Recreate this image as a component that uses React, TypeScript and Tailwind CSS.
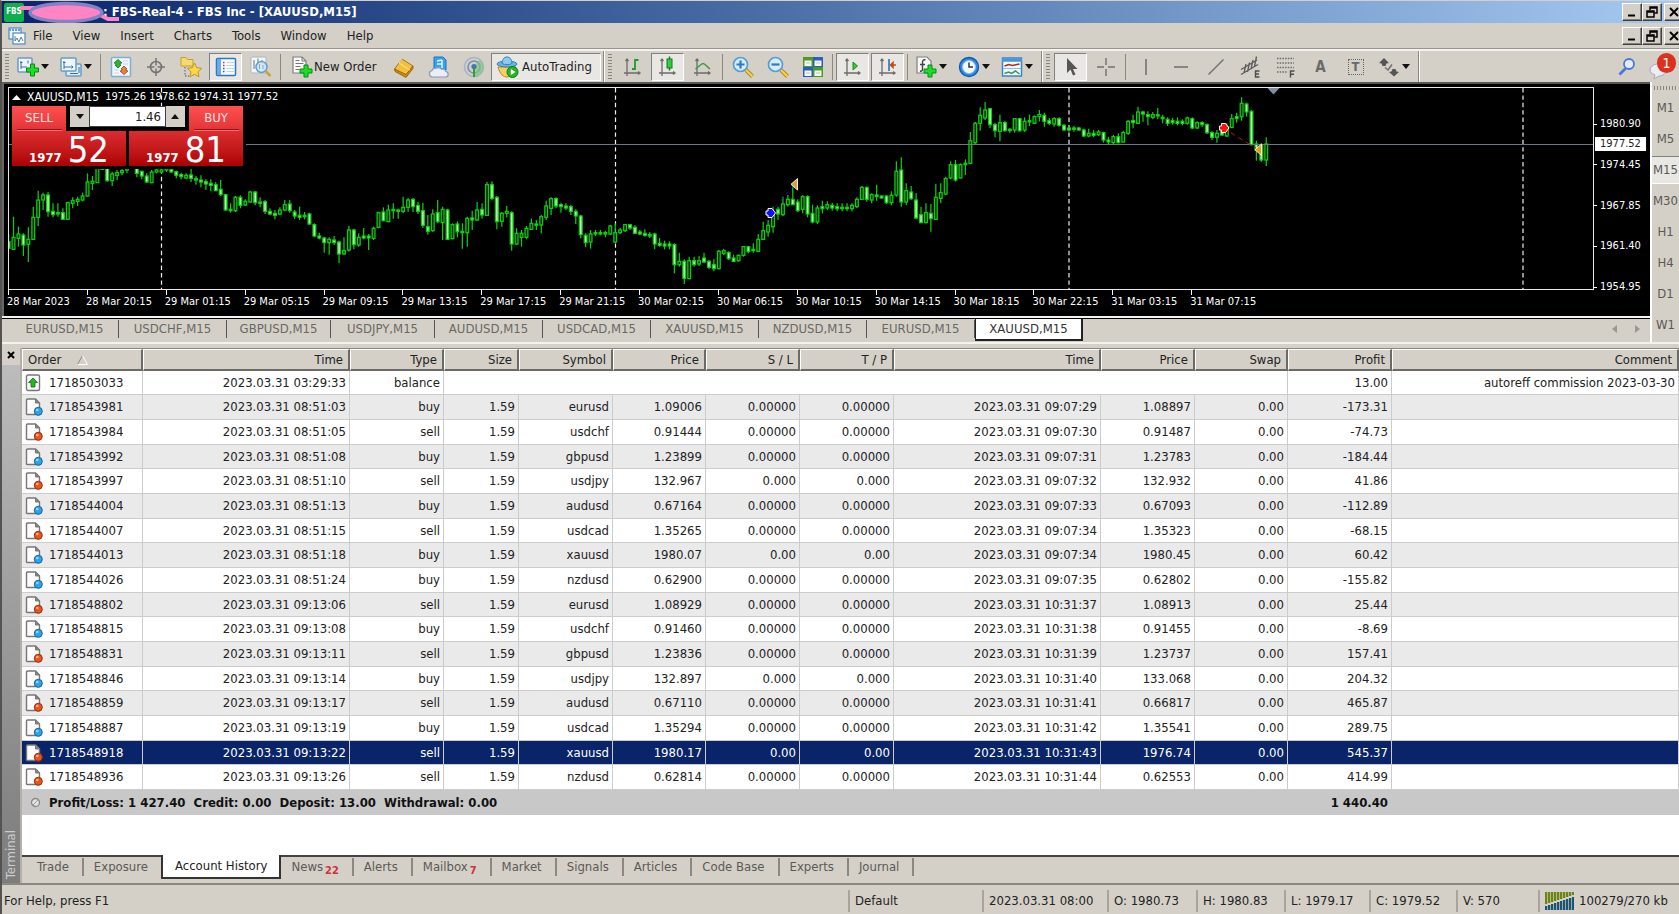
import React from "react";

type Trade = {
  id: string;
  open: string;
  side: "buy" | "sell";
  symbol: string;
  price: string;
  stop: string;
  close: string;
  exit: string;
  profit: string;
  selected?: boolean;
};

const t = (
  id: string,
  open: string,
  side: "buy" | "sell",
  symbol: string,
  price: string,
  stop: string,
  close: string,
  exit: string,
  profit: string,
  selected = false
): Trade => ({ id, open, side, symbol, price, stop, close, exit, profit, selected });

const TRADES: Trade[] = [
  t("1718543981", "08:51:03", "buy", "eurusd", "1.09006", "0.00000", "09:07:29", "1.08897", "-173.31"),
  t("1718543984", "08:51:05", "sell", "usdchf", "0.91444", "0.00000", "09:07:30", "0.91487", "-74.73"),
  t("1718543992", "08:51:08", "buy", "gbpusd", "1.23899", "0.00000", "09:07:31", "1.23783", "-184.44"),
  t("1718543997", "08:51:10", "sell", "usdjpy", "132.967", "0.000", "09:07:32", "132.932", "41.86"),
  t("1718544004", "08:51:13", "buy", "audusd", "0.67164", "0.00000", "09:07:33", "0.67093", "-112.89"),
  t("1718544007", "08:51:15", "sell", "usdcad", "1.35265", "0.00000", "09:07:34", "1.35323", "-68.15"),
  t("1718544013", "08:51:18", "buy", "xauusd", "1980.07", "0.00", "09:07:34", "1980.45", "60.42"),
  t("1718544026", "08:51:24", "buy", "nzdusd", "0.62900", "0.00000", "09:07:35", "0.62802", "-155.82"),
  t("1718548802", "09:13:06", "sell", "eurusd", "1.08929", "0.00000", "10:31:37", "1.08913", "25.44"),
  t("1718548815", "09:13:08", "buy", "usdchf", "0.91460", "0.00000", "10:31:38", "0.91455", "-8.69"),
  t("1718548831", "09:13:11", "sell", "gbpusd", "1.23836", "0.00000", "10:31:39", "1.23737", "157.41"),
  t("1718548846", "09:13:14", "buy", "usdjpy", "132.897", "0.000", "10:31:40", "133.068", "204.32"),
  t("1718548859", "09:13:17", "sell", "audusd", "0.67110", "0.00000", "10:31:41", "0.66817", "465.87"),
  t("1718548887", "09:13:19", "buy", "usdcad", "1.35294", "0.00000", "10:31:42", "1.35541", "289.75"),
  t("1718548918", "09:13:22", "sell", "xauusd", "1980.17", "0.00", "10:31:43", "1976.74", "545.37", true),
  t("1718548936", "09:13:26", "sell", "nzdusd", "0.62814", "0.00000", "10:31:44", "0.62553", "414.99"),
];

/* Each candle: wick top, body top, body bottom, wick bottom (thirds of a pixel), u = hollow, d = filled. */
const EARLY = `252 275 295 298 d,200 262 298 298 u,230 252 265 290 u,250 255 285 318 d,232 268 283 336 u,170 202 268 268 u,122 150 202 228 u,128 135 150 180 u,126 135 185 200 d,160 184 194 202 d,160 188 192 200 d,175 188 208 210 d,155 158 208 208 u,142 152 160 175 u,140 148 154 168 u,128 138 150 154 u,70 96 138 140 u,78 94 100 120 u,55 55 98 98 u,40 45 58 58 u,40 50 92 95 d,65 72 92 108 u,60 68 76 90 u,50 62 68 76 u,45 55 60 70 u,40 44 50 55 u,50 52 70 82 d,62 64 78 88 d,70 78 96 98 d,60 66 98 100 u,52 60 66 70 u,50 60 66 70 u,48 55 60 66 u,55 58 66 68 d,62 65 76 85 d,68 74 80 88 d,70 76 84 88 u,56 75 85 96 d,78 86 90 104 d,76 90 96 112 d,88 95 102 120 d,88 100 106 124 d,96 104 122 124 d,90 118 134 138 d,132 134 180 182 d,160 178 182 188 d,138 142 182 186 u,136 142 166 175 d,148 154 165 168 u,122 126 156 158 u,124 126 158 166 d,142 156 160 172 d,150 155 184 192 d,175 184 192 196 d,180 190 196 208 d,172 180 192 196 u,150 164 180 184 u,150 162 182 188 d,180 186 198 206 d,170 196 202 210 d,186 196 200 208 d,188 192 222 225 d,220 224 258 262 d,248 258 264 268 d,260 264 278 308 d,262 268 278 314 u,258 270 278 284 d,272 276 312 340 d,262 302 312 314 u,228 240 300 305 u,236 240 284 298 d,250 262 285 290 u,234 258 264 268 d,252 258 264 300 d,230 235 265 270 u,185 188 232 235 u,172 186 212 214 d,164 180 215 216 u,160 178 182 206 d,176 180 184 206 d,140 172 184 190 u,144 150 172 185 u,144 148 170 186 d,155 166 184 192 d,158 182 226 234 d,195 230 244 254 d,178 192 242 245 u,150 188 215 220 d,170 178 218 270 u,176 180 268 270 d,220 224 266 268 u,214 222 245 262 d,220 244 248 296 d,200 205 248 290 u,182 204 210 240 d,156 180 210 212 u,160 178 195 206 d,96 104 196 196 u,94 104 145 150 d,138 142 215 238 d,186 190 214 230 u,168 184 190 202 u,184 188 282 302 d,235 250 282 285 u,240 250 262 290 u,228 235 262 268 u,206 220 238 240 u,210 222 226 240 d`;
const LATE = `405 410 435 460 u,362 378 412 420 u,352 356 385 405 u,352 356 378 385 d,368 374 380 398 d,370 378 384 390 d,374 380 394 405 d,388 394 408 432 d,404 408 464 475 d,460 466 488 502 d,450 462 486 506 u,450 458 462 468 d,450 458 462 466 d,452 458 462 472 d,435 438 462 465 u,430 458 486 490 u,444 450 458 462 u,432 434 452 456 u,432 434 444 450 d,436 442 460 462 d,450 456 462 466 d,448 460 466 470 d,456 464 468 474 d,458 462 492 508 d,474 490 496 500 d,482 492 498 508 d,484 492 498 508 d,490 494 554 580 d,518 544 554 560 u,538 544 595 612 d,530 542 596 598 u,530 542 554 560 d,528 542 552 558 u,518 534 546 550 d,540 544 562 568 d,538 554 566 574 d,510 514 566 568 u,506 512 520 526 u,514 518 536 540 d,524 534 544 546 d,524 526 542 545 u,498 500 526 530 u,498 500 515 520 d,490 508 512 518 d,462 478 514 516 u,425 452 478 480 u,420 436 456 470 u,380 402 440 458 u,380 388 402 420 d,350 372 404 408 u,345 358 374 380 u,318 358 374 374 d,358 366 392 396 d,346 350 388 400 u,346 350 402 412 d,374 400 426 430 d,376 384 426 432 u,362 380 386 400 d,364 374 384 390 u,368 376 384 392 d,370 380 386 394 d,370 382 386 394 d,370 382 386 394 d,370 376 386 394 u,352 358 380 385 u,318 322 358 360 u,320 322 358 365 d,340 344 360 370 u,314 345 350 362 d,346 348 354 356 d,346 348 368 372 d,334 346 368 376 u,244 274 345 350 u,232 270 366 380 d,310 332 366 375 u,318 336 356 360 d,340 360 414 418 d,380 404 428 430 d,370 398 428 430 u,372 400 416 455 d,312 352 418 420 u,310 338 355 370 u,290 296 342 345 u,244 254 294 298 u,240 254 300 305 d,250 254 294 295 u,238 250 254 285 d,156 182 250 252 u,126 130 188 192 u,82 106 130 152 u,66 90 114 120 u,84 86 134 145 d,128 134 152 172 d,104 128 154 184 u,122 128 152 155 d,144 148 152 158 d,114 116 150 158 u,114 116 152 155 d,112 124 150 156 u,104 122 126 138 d,106 110 130 132 u,90 104 110 124 u,98 106 124 140 d,114 122 130 136 d,112 116 132 140 u,112 116 136 140 d,132 136 150 152 d,136 144 150 155 d,138 144 148 155 d,140 144 150 152 d,146 150 168 170 d,146 160 168 172 u,150 160 166 172 d,150 156 164 168 u,155 158 180 188 d,170 180 186 192 d,165 170 188 192 u,160 170 188 190 d,152 158 186 188 u,120 124 160 165 u,105 122 128 145 d,80 96 130 132 u,92 96 102 125 d,94 104 110 136 d,96 104 112 118 u,84 104 108 118 d,104 112 116 130 d,112 118 130 138 d,114 122 128 134 d,112 124 130 136 d,118 124 130 136 d,110 114 130 134 u,112 116 144 148 d,124 128 144 146 u,124 128 134 142 d,130 134 158 162 d,154 158 172 180 d,150 160 172 188 u,138 150 165 168 d,130 140 168 170 u,102 116 142 145 u,98 110 116 128 d,52 70 110 122 u,68 72 96 110 d,90 94 194 196 d,182 192 210 242 d,190 196 240 246 d,172 192 240 258 u`;

const parse = (text: string, base: number) =>
  text.split(",").map((row) => {
    const [hi, top, bottom, lo, kind] = row.split(" ");
    const y = (v: string) => base + Number(v) / 3;
    return { hi: y(hi), top: y(top), bottom: y(bottom), lo: y(lo), hollow: kind === "u" };
  });

const CANDLES = [...parse(EARLY, 150), ...parse(LATE, 80)];

function Candles() {
  return (
    <g stroke="#10cc10" strokeWidth="1.25">
      {CANDLES.map((c, i) => {
        const x = 8.6 + i * 4.932;
        return (
          <g key={i}>
            <line x1={x} x2={x} y1={c.hi} y2={c.lo} />
            <rect
              x={x - 1.4}
              y={c.top}
              width="2.8"
              height={Math.max(c.bottom - c.top, 1)}
              fill={c.hollow ? "#002a00" : "#b4f0b4"}
            />
          </g>
        );
      })}
    </g>
  );
}

function Plot() {
  return (
    <svg className="block h-[201px] w-full" aria-label="XAUUSD M15 chart">
      <g transform="translate(-9 -88)">
        <g stroke="#f0f0f0" strokeWidth="1.2" strokeDasharray="4.4 3">
          <line x1="161.5" x2="161.5" y1="88" y2="290" />
          <line x1="615.5" x2="615.5" y1="88" y2="290" />
          <line x1="1069" x2="1069" y1="88" y2="290" />
          <line x1="1523" x2="1523" y1="88" y2="290" />
        </g>
        <Candles />
        <line x1="9" x2="4000" y1="144.5" y2="144.5" stroke="#6b7a88" />
        <path d="M770 213 L795 184" stroke="#1414b4" strokeDasharray="4 4" />
        <path d="M1223 128 L1259 150" stroke="#c01414" strokeDasharray="5 4" />
        <path d="M766 211h2v-2.500h4l3.500 4.500-3.500 4.500h-4V215h-2z" fill="#1010ff" stroke="#fff" />
        <path d="M1219.500 126h2v-2.500h4l3.500 4.500-3.500 4.500h-4V130h-2z" fill="#ff1010" stroke="#fff" />
        <path d="M797.500 178.500v11.500l-6.500-5.700z" fill="#d8a23c" stroke="#f5ecd0" />
        <path d="M1261.500 144v11.500l-6.500-5.700z" fill="#e0a020" stroke="#f5ecd0" />
        <path d="M1267.500 88h12l-6 6.500z" fill="#8090a4" />
      </g>
    </svg>
  );
}

/* ---------- toolbar glyphs ---------- */

const Svg = ({ children }: { children: React.ReactNode }) => (
  <svg width="24" height="24" viewBox="0 0 24 24" fill="none" className="shrink-0" aria-hidden="true">
    {children}
  </svg>
);

const plus = (x: number, y: number) => (
  <path
    d={`M${x + 4} ${y}h4v4h4v4h-4v4h-4v-4h-4v-4h4z`}
    fill="#1fdc2c"
    stroke="#078a12"
    strokeWidth="1"
    strokeLinejoin="round"
  />
);

const axes = (
  <path
    d="M6 4v17M3 18h16M4.500 6L6 4l1.500 2M17 16.500l2 1.500-2 1.500"
    stroke="#6c6c6c"
    strokeWidth="1.300"
  />
);

const I = {
  newChart: (
    <Svg>
      <rect x="2" y="3" width="14" height="14" rx="1" fill="#eef6fc" stroke="#6a9cc8" strokeWidth="1.500" />
      <path d="M5 6v8M4 7.500h2.500M5 12h6M12 5.500v3" stroke="#3d6f9d" />
      {plus(10.5, 9)}
    </Svg>
  ),
  profiles: (
    <Svg>
      <rect x="7" y="9" width="15" height="12" rx="1" fill="#dcecf8" stroke="#6a9cc8" strokeWidth="1.500" />
      <rect x="2" y="3" width="15" height="13" rx="1" fill="#eef6fc" stroke="#6a9cc8" strokeWidth="1.500" />
      <path d="M5 6v8M4 7.500h2.500M5 12h9M12.500 10.500L14 12l-1.500 1.500M20 12v6M11 18.500h8" stroke="#3d6f9d" />
    </Svg>
  ),
  marketWatch: (
    <Svg>
      <rect x="2.500" y="2.500" width="19" height="19" rx="1" fill="#f2f9ff" stroke="#7ab0da" strokeWidth="1.500" />
      <path d="M14 6h5M14 9h5M5 15h5M5 18h5" stroke="#c4d8e8" />
      <path d="M9 4.500l4 3.500-2 .3v1.500l1 .2L9 13l-3-3 1-.2V8.300L5 8z" fill="#2fb52f" stroke="#157515" strokeWidth=".8" />
      <path d="M15 19.500l4-3.500-2-.3v-1.500l1-.2L15 11l-3 3 1 .2v1.500l-2 .3z" fill="#f0803c" stroke="#a83c10" strokeWidth=".8" />
    </Svg>
  ),
  cross: (
    <Svg>
      <circle cx="12" cy="12" r="5.500" stroke="#747474" strokeWidth="1.700" />
      <path d="M12 3v7.500M12 13.500V21M3 12h7.500M13.500 12H21" stroke="#747474" strokeWidth="1.500" />
    </Svg>
  ),
  navigator: (
    <Svg>
      <path d="M2 2.500h5l1.500 2H14v6.500H2z" fill="#f4da70" stroke="#c8a028" />
      <path d="M6 12v9h4" stroke="#777" strokeWidth="1.300" strokeDasharray="1.500 1.500" />
      <path
        d="M15.500 8l2.200 4.700 5 .6-3.700 3.500 1 5-4.500-2.500-4.500 2.500 1-5-3.700-3.500 5-.6z"
        fill="#fbd84a"
        stroke="#c49420"
      />
    </Svg>
  ),
  terminal: (
    <Svg>
      <rect x="2.500" y="3.500" width="19" height="17" rx="1" fill="#f7fbff" stroke="#2f78c0" strokeWidth="1.500" />
      <path d="M3 4h4v16H3z" fill="#6aace8" />
      <path d="M9 7.500h1.500M9 10.500h1.500" stroke="#d03030" strokeWidth="1.500" />
      <path d="M9 13.500h1.500M9 16.500h1.500" stroke="#3060a0" strokeWidth="1.500" />
      <path d="M12.500 7.500H20M12.500 10.500H20M12.500 13.500H20M12.500 16.500H20" stroke="#c4d4e4" />
    </Svg>
  ),
  tester: (
    <Svg>
      <rect x="2" y="2" width="15" height="16" rx="1" fill="#f4f6f8" stroke="#a8b8c4" />
      <path d="M5 5v9M9 3.500v7M13 5v5" stroke="#5c7890" />
      <circle cx="12.500" cy="12" r="5.500" fill="#cfe6f8" fillOpacity=".9" stroke="#6a9cc8" strokeWidth="1.500" />
      <path d="M10.500 9v5M14 10v4" stroke="#7fa8c8" />
      <path d="M17 16.500l4.500 4.500" stroke="#d0a030" strokeWidth="2.500" />
    </Svg>
  ),
  order: (
    <Svg>
      <path d="M3 2h9l4 4v12H3z" fill="#fbfbfb" stroke="#808080" strokeWidth="1.200" />
      <path d="M12 2v4h4M5.500 5.500h4M5.500 8.500h8M5.500 11.500h5M5.500 14.500h4" stroke="#777" />
      {plus(10, 10)}
    </Svg>
  ),
  book: (
    <Svg>
      <path d="M2.500 14L10 4l11 7-7 9.500z" fill="#f2c13c" stroke="#a87410" strokeLinejoin="round" />
      <path d="M2.500 14l.5 2.500 11 6 7-9V11l-7 8.500z" fill="#c88a18" stroke="#8c5c0c" strokeWidth=".8" />
      <path d="M10 4l-3 4 11 7" stroke="#fae08c" />
    </Svg>
  ),
  cloud: (
    <Svg>
      <path d="M7 2h9l3 3v10H7z" fill="#36a4f0" stroke="#1c74c0" />
      <path d="M10 6l5-1M10 9h5M15 5v8" stroke="#e4f4ff" strokeWidth="1.500" />
      <path
        d="M5.500 22a3.300 3.300 0 0 1-.5-6.500 3.500 3.500 0 0 1 4-2.300 4.500 4.500 0 0 1 5.500 1 3.500 3.500 0 0 1 4.300 2.300A2.800 2.800 0 0 1 19 22z"
        fill="#e9eff8"
        stroke="#8898b8"
        strokeWidth="1.200"
      />
    </Svg>
  ),
  signal: (
    <Svg>
      <circle cx="12" cy="12" r="9.500" stroke="#a4b4c8" strokeWidth="1.600" />
      <circle cx="12" cy="12" r="6" stroke="#7694b4" strokeWidth="1.700" />
      <path d="M12 12v10a10 10 0 0 0 9.500-9A8 8 0 0 0 17 5z" fill="#7cc47c" fillOpacity=".65" />
      <circle cx="12" cy="11.500" r="2.600" fill="#3e78b8" />
      <path d="M12 13v9" stroke="#3a9a3a" strokeWidth="2" />
    </Svg>
  ),
  expert: (
    <Svg>
      <path d="M3 12c2 8 6 10 9 10s7-3 9-10z" fill="#f5d060" stroke="#b88c20" />
      <ellipse cx="12" cy="9" rx="10" ry="3" fill="#6ab4e4" stroke="#3a80b4" />
      <path d="M7 8.500C7.500 4 9 2 12 2s4.500 2 5 6.500c-3 1.500-7 1.500-10 0z" fill="#8ccaf0" stroke="#3a80b4" />
      <circle cx="17.500" cy="17" r="5.500" fill="#28b428" stroke="#0f7c0f" />
      <path d="M15.800 14v6l4.700-3z" fill="#fff" />
    </Svg>
  ),
  bars: (
    <Svg>
      {axes}
      <path d="M14 4v11M14 5h3.500M11 14h3" stroke="#1f9c2c" strokeWidth="1.800" />
    </Svg>
  ),
  candles: (
    <Svg>
      {axes}
      <path d="M13.500 1.500v14" stroke="#0f7c1c" strokeWidth="1.500" />
      <rect x="11" y="4" width="5" height="9" fill="#2cd03c" stroke="#0f7c1c" />
    </Svg>
  ),
  line: (
    <Svg>
      {axes}
      <path d="M4.500 14C8 12 10 8.500 12 8.500s3.500 3 7 5.500" stroke="#3a9c44" strokeWidth="1.500" />
    </Svg>
  ),
  zoomIn: (
    <Svg>
      <path d="M15 15l6.500 6.500" stroke="#b88a18" strokeWidth="4" />
      <path d="M15 15l6.500 6.500" stroke="#f4d458" strokeWidth="2" />
      <circle cx="9.500" cy="9.500" r="7" fill="#d4ecfc" stroke="#5a9cd4" strokeWidth="1.700" />
      <path d="M9.500 5.500v8M5.500 9.500h8" stroke="#2f7cb8" strokeWidth="2.200" />
    </Svg>
  ),
  zoomOut: (
    <Svg>
      <path d="M15 15l6.500 6.500" stroke="#b88a18" strokeWidth="4" />
      <path d="M15 15l6.500 6.500" stroke="#f4d458" strokeWidth="2" />
      <circle cx="9.500" cy="9.500" r="7" fill="#d4ecfc" stroke="#5a9cd4" strokeWidth="1.700" />
      <path d="M5.500 9.500h8" stroke="#2f7cb8" strokeWidth="2.200" />
    </Svg>
  ),
  tiles: (
    <Svg>
      <rect x="2" y="2" width="10" height="10" fill="#4c9c24" />
      <rect x="12" y="2" width="10" height="10" fill="#2c5cc0" />
      <rect x="2" y="12" width="10" height="10" fill="#2c5cc0" />
      <rect x="12" y="12" width="10" height="10" fill="#4c9c24" />
      <path d="M3.500 5.500h7V11h-7zM13.500 5.500h7V11h-7zM3.500 15.500h7V21h-7zM13.500 15.500h7V21h-7z" fill="#f2f7f2" />
      <path d="M5 8h4M15 8h4M5 18h4M15 18h4" stroke="#b8ccb0" />
    </Svg>
  ),
  autoScroll: (
    <Svg>
      {axes}
      <path d="M12 7v8l4.500-4z" fill="#3cc83c" stroke="#148c1c" />
    </Svg>
  ),
  shift: (
    <Svg>
      {axes}
      <path d="M13 4v12" stroke="#3a78b4" strokeWidth="1.700" />
      <path d="M20 10h-6M17 7.500L14.500 10l2.500 2.500z" fill="#c84818" stroke="#c84818" strokeWidth="1.500" />
    </Svg>
  ),
  indicators: (
    <Svg>
      <path d="M3 2h10l4 4v12H3z" fill="#f7f7f7" stroke="#808080" strokeWidth="1.200" />
      <path d="M11.500 5C9 4 8.500 6 8.500 8v6c0 2-1 2.500-2.500 2M6 9.500h5" stroke="#444" strokeWidth="1.400" />
      {plus(10, 10)}
    </Svg>
  ),
  clock: (
    <Svg>
      <circle cx="12" cy="12" r="9.500" fill="#2c8ce8" stroke="#0e5cac" strokeWidth="1.400" />
      <circle cx="12" cy="12" r="6.500" fill="#f2f8ff" stroke="#8cc0f0" />
      <path d="M12 7.500V12h4" stroke="#333" strokeWidth="1.500" />
    </Svg>
  ),
  template: (
    <Svg>
      <rect x="2.500" y="3" width="19" height="18" fill="#f4faff" stroke="#3a84cc" strokeWidth="1.500" />
      <path d="M2 5h20" stroke="#4a94dc" strokeWidth="3.500" />
      <path d="M4.500 11l4-1.500 4 1 7-1.500" stroke="#a03020" strokeWidth="1.500" />
      <path d="M3 13.500h18" stroke="#90b8d8" />
      <path d="M4.500 18.500l4-1.500 3 1.500 4-2.500 4 3" stroke="#2f9c4c" strokeWidth="1.500" />
    </Svg>
  ),
  pointer: (
    <Svg>
      <path d="M8 3v15l3.500-3.500L14 20.500l2.500-1-2.500-5.500h4.500z" fill="#555" />
    </Svg>
  ),
  crossPlain: (
    <Svg>
      <path d="M12 3v7M12 14v7M3 12h7M14 12h7" stroke="#707070" strokeWidth="1.400" />
    </Svg>
  ),
  vline: (
    <Svg>
      <path d="M12 4v16" stroke="#666" strokeWidth="1.400" />
    </Svg>
  ),
  hline: (
    <Svg>
      <path d="M5 12h14" stroke="#666" strokeWidth="1.400" />
    </Svg>
  ),
  trend: (
    <Svg>
      <path d="M4.500 19.500l15-15" stroke="#707070" strokeWidth="1.400" />
    </Svg>
  ),
  channel: (
    <Svg>
      <path
        d="M2 14.500L18 5M2 19.500L19 9.500M7 9l-2 9M10.500 7.500l-2 9.500M14 5l-2 9M17.500 1.500l-2 10"
        stroke="#5c5c5c"
        strokeWidth="1.300"
      />
      <path d="M20.500 16h-4v6h4M16.500 19h3.500" stroke="#4c4c4c" strokeWidth="1.400" />
    </Svg>
  ),
  fibo: (
    <Svg>
      <path d="M3 3.500h17M3 8h17M3 12.500h17M3 17h10" stroke="#6c6c6c" strokeWidth="1.400" strokeDasharray="1.500 1.200" />
      <path d="M20.500 16h-4v6.500M16.500 19.200h3.500" stroke="#4c4c4c" strokeWidth="1.400" />
    </Svg>
  ),
  objects: (
    <Svg>
      <path d="M7 3l5 5-2.500.5-1 2.500h-3l-1-2.500L2 8zM17 21.500l-5-4.500 2.500-.5 1-2.500h3l1 2.500 2.500.5z" fill="#555" />
      <path d="M8 12.500l3 2.500 4-5.500" stroke="#707070" strokeWidth="1.500" />
    </Svg>
  ),
};

const Caret = () => (
  <svg width="8" height="5" viewBox="0 0 8 5" className="shrink-0" aria-hidden="true">
    <path d="M0 0h8L4 5z" fill="#111" />
  </svg>
);

function Tool({ label, pressed, children }: { label: string; pressed?: boolean; children: React.ReactNode }) {
  return (
    <button
      aria-label={label}
      className={
        pressed
          ? "mx-px flex h-7 w-[33px] shrink-0 items-center justify-center border border-t-[#808080] border-l-[#808080] border-r-white border-b-white bg-[#e9e7e3]"
          : "flex h-7 w-[35px] shrink-0 items-center justify-center"
      }
    >
      {children}
    </button>
  );
}

function DropTool({ label, children }: { label: string; children: React.ReactNode }) {
  return (
    <button aria-label={label} className="flex h-7 w-[43px] shrink-0 items-center justify-start gap-px pl-1">
      {children}
      <Caret />
    </button>
  );
}

const Sep = () => <div className="mx-[2px] h-[26px] w-px shrink-0 bg-[#8c8880]" />;
const Edge = () => <div className="ml-[2px] h-full w-[2px] shrink-0 border-l border-l-[#8c8880] bg-white" />;
const Grip = () => (
  <div className="mx-[3px] h-[25px] w-[4px] shrink-0 bg-[repeating-linear-gradient(180deg,#8a8780_0px,#8a8780_1px,#d4d0c8_1px,#d4d0c8_3px)]" />
);

function WinButtons() {
  const face =
    "flex h-[18px] w-[20px] shrink-0 items-center justify-center border border-t-white border-l-white border-r-[#404040] border-b-[#404040] bg-[#d4d0c8] shadow-[inset_-1px_-1px_0_#808080]";
  return (
    <div className="-mr-[5px] flex shrink-0">
      <button aria-label="Minimize" className={face}>
        <svg width="12" height="12" viewBox="0 0 12 12">
          <path d="M2 9.500h7" stroke="#000" strokeWidth="2" />
        </svg>
      </button>
      <button aria-label="Restore" className={face}>
        <svg width="12" height="12" viewBox="0 0 12 12" fill="none">
          <path d="M4 4V1h7v6H8.500M4 2h7" stroke="#000" strokeWidth="1.500" />
          <path d="M1 5h7v6H1zM1 6h7" stroke="#000" strokeWidth="1.500" />
        </svg>
      </button>
      <button aria-label="Close" className={`${face} ml-[2px]`}>
        <svg width="12" height="12" viewBox="0 0 12 12">
          <path d="M2 2l8 8M10 2l-8 8" stroke="#000" strokeWidth="1.900" />
        </svg>
      </button>
    </div>
  );
}

function TitleBar() {
  return (
    <header className="relative flex h-[22px] items-center bg-linear-to-r from-[#0a246a] to-[#a6caf0] pl-[2px] text-white">
      <span className="flex h-[19px] w-[20px] shrink-0 items-center justify-center rounded-xs bg-[#0cb04c] text-[8px] font-bold">
        FBS
      </span>
      <h1 className="ml-[79px] text-[13px] leading-4 font-bold whitespace-nowrap">
        : FBS-Real-4 - FBS Inc - [XAUUSD,M15]
      </h1>
      <svg className="absolute top-0 left-[16px]" width="104" height="22" viewBox="0 0 104 22" fill="none" aria-hidden="true">
        <path d="M2 7h22M82 14l8 4h11" stroke="#ff84c4" strokeWidth="4" />
        <ellipse cx="48" cy="11.500" rx="36" ry="9" fill="#ff84c4" stroke="#8482c4" strokeWidth="3.500" />
      </svg>
      <div className="flex-1" />
      <WinButtons />
    </header>
  );
}

function MenuBar() {
  return (
    <nav className="flex h-[26px] items-center border-b border-b-[#9a968e] pl-[6px] text-[13px] text-[#222]">
      <svg width="18" height="18" viewBox="0 0 18 18" fill="none" aria-hidden="true">
        <rect x="1" y="1" width="12" height="11" fill="#eef6fc" stroke="#5a8fc0" strokeWidth="1.300" />
        <path d="M1 3h12" stroke="#5a9cdc" strokeWidth="2" strokeDasharray="2 1" />
        <rect x="5" y="6" width="12" height="11" fill="#fff" stroke="#5a8fc0" strokeWidth="1.300" />
        <path d="M7 9v5l2-3 2 4 2-5 2 4" stroke="#4a80b4" />
      </svg>
      <div className="ml-[7px] flex gap-5">
        {["File", "View", "Insert", "Charts", "Tools", "Window", "Help"].map((m) => (
          <button key={m}>{m}</button>
        ))}
      </div>
      <div className="flex-1" />
      <WinButtons />
    </nav>
  );
}

function Toolbar() {
  return (
    <div className="flex h-[33px] items-center overflow-hidden border-t-2 border-t-[#f4f2ee] text-[13px] text-[#222]">
      <Grip />
      <DropTool label="New chart">{I.newChart}</DropTool>
      <DropTool label="Profiles">{I.profiles}</DropTool>
      <Sep />
      <Tool label="Market Watch">{I.marketWatch}</Tool>
      <Tool label="Data Window">{I.cross}</Tool>
      <Tool label="Navigator">{I.navigator}</Tool>
      <Tool label="Terminal" pressed>{I.terminal}</Tool>
      <Tool label="Strategy Tester">{I.tester}</Tool>
      <Sep />
      <button className="flex h-7 w-[103px] shrink-0 items-center pl-[7px] whitespace-nowrap">
        {I.order}
        New Order
      </button>
      <Tool label="MetaEditor">{I.book}</Tool>
      <Tool label="Hosting">{I.cloud}</Tool>
      <Tool label="Signals">{I.signal}</Tool>
      <button className="flex h-7 w-[110px] shrink-0 items-center gap-[3px] border border-t-[#808080] border-l-[#808080] border-r-white border-b-white bg-[#e9e7e3] pl-[3px] whitespace-nowrap">
        {I.expert}
        AutoTrading
      </button>
      <Edge />
      <Grip />
      <Tool label="Bar chart">{I.bars}</Tool>
      <Tool label="Candlesticks" pressed>{I.candles}</Tool>
      <Tool label="Line chart">{I.line}</Tool>
      <Sep />
      <Tool label="Zoom in">{I.zoomIn}</Tool>
      <Tool label="Zoom out">{I.zoomOut}</Tool>
      <Tool label="Tile windows">{I.tiles}</Tool>
      <Sep />
      <Tool label="Auto scroll" pressed>{I.autoScroll}</Tool>
      <Tool label="Chart shift" pressed>{I.shift}</Tool>
      <Sep />
      <DropTool label="Indicators">{I.indicators}</DropTool>
      <DropTool label="Periodicity">{I.clock}</DropTool>
      <DropTool label="Templates">{I.template}</DropTool>
      <Edge />
      <Grip />
      <Tool label="Cursor" pressed>{I.pointer}</Tool>
      <Tool label="Crosshair">{I.crossPlain}</Tool>
      <Sep />
      <Tool label="Vertical line">{I.vline}</Tool>
      <Tool label="Horizontal line">{I.hline}</Tool>
      <Tool label="Trendline">{I.trend}</Tool>
      <Tool label="Equidistant channel">{I.channel}</Tool>
      <Tool label="Fibonacci retracement">{I.fibo}</Tool>
      <Tool label="Text">
        <span className="text-[15px] leading-5 font-bold text-[#6a6a6a]">A</span>
      </Tool>
      <Tool label="Text label">
        <span className="flex h-4 w-4 items-center justify-center border border-dotted border-[#666] text-[13px] leading-4 font-bold text-[#6a6a6a]">
          T
        </span>
      </Tool>
      <DropTool label="Arrows">{I.objects}</DropTool>
      <Edge />
      <div className="flex-1" />
      <button aria-label="Search" className="flex h-7 w-7 shrink-0 items-center justify-center">
        <svg width="20" height="20" viewBox="0 0 20 20" fill="none">
          <path d="M2.500 17.500l6-6" stroke="#4a78d4" strokeWidth="2.800" />
          <circle cx="12" cy="7" r="5" fill="#e4ecfa" stroke="#4a78d4" strokeWidth="1.800" />
        </svg>
      </button>
      <button aria-label="Messages" className="relative ml-2 flex h-7 w-[30px] shrink-0 items-center">
        <svg width="20" height="20" viewBox="0 0 20 20" className="mt-2">
          <path d="M9 3c5 0 8 2.500 8 6s-3 6-7 6l-5 3 1-4c-3-1-5-2.500-5-5s3-6 8-6z" fill="#eceef4" stroke="#a8a8b4" />
        </svg>
        <span className="absolute top-0 right-[3px] flex h-5 w-[19px] items-center justify-center rounded-full bg-[#dc3020] text-sm leading-none text-white">
          1
        </span>
      </button>
    </div>
  );
}

function OneClick() {
  const tab =
    "flex h-[25px] w-[54px] flex-col items-center justify-between bg-linear-to-b from-[#ff5050] to-[#e23236] pt-[4px] text-[13px] leading-4 text-[#ffe4e0]";
  const rule = "h-[2px] w-[45px] border-t border-t-[#8c1418] bg-[#f07070]";
  const body =
    "flex h-[35px] flex-1 items-end justify-center gap-[6px] bg-linear-to-b from-[#dc2c30] to-[#ac0000] text-white";
  const spin = "flex h-full w-[19px] items-center justify-center bg-[#d4d0c8]";
  return (
    <div className="absolute top-[18px] left-[3px] flex w-[234px] flex-col bg-black pr-[3px] pb-[3px]">
      <div className="flex justify-between">
        <button className={tab}>
          SELL
          <span className={rule} />
        </button>
        <div className="flex h-[21px] w-[115px] bg-[#d4d0c8]">
          <button aria-label="Decrease volume" className={spin}>
            <Caret />
          </button>
          <input
            aria-label="Volume"
            defaultValue="1.46"
            className="h-full w-[77px] min-w-0 border border-[#404040] bg-white pr-1 text-right text-[13px] text-[#222] outline-none"
          />
          <button aria-label="Increase volume" className={`${spin} rotate-180`}>
            <Caret />
          </button>
        </div>
        <button className={tab}>
          BUY
          <span className={rule} />
        </button>
      </div>
      <div className="flex gap-[3px]">
        <button className={body}>
          <span className="text-[13px] leading-4 font-bold">1977</span>
          <span className="text-4xl leading-8">52</span>
        </button>
        <button className={body}>
          <span className="text-[13px] leading-4 font-bold">1977</span>
          <span className="text-4xl leading-8">81</span>
        </button>
      </div>
    </div>
  );
}

const TIMES = [
  "28 Mar 2023", "28 Mar 20:15", "29 Mar 01:15", "29 Mar 05:15", "29 Mar 09:15", "29 Mar 13:15", "29 Mar 17:15", "29 Mar 21:15",
  "30 Mar 02:15", "30 Mar 06:15", "30 Mar 10:15", "30 Mar 14:15", "30 Mar 18:15", "30 Mar 22:15", "31 Mar 03:15", "31 Mar 07:15",
];

const PRICES = ["1980.90", "1974.45", "1967.85", "1961.40", "1954.95"];

function Chart() {
  return (
    <section className="border-t-2 border-l-2 border-t-[#555] border-l-[#666] bg-black pt-[3px] pl-[3px] text-[11px] leading-[14px] font-medium text-white">
      <div className="flex pl-px">
        <div className="relative min-w-0 flex-1 overflow-hidden border border-[#e8e8e8]">
          <Plot />
          <div className="absolute top-[2px] left-[3px] flex items-center gap-[6px] whitespace-pre">
            <svg width="9" height="5" viewBox="0 0 9 5" aria-hidden="true">
              <path d="M0 5h9L4.500 0z" fill="#fff" />
            </svg>
            <span className="text-xs leading-[14px]">XAUUSD,M15</span>
            <span>1975.26 1978.62 1974.31 1977.52</span>
          </div>
          <OneClick />
        </div>
        <div className="relative -mb-1 flex w-[56px] shrink-0 flex-col justify-between pt-[30px]">
          {PRICES.map((p) => (
            <div key={p} className="flex items-center gap-[3px]">
              <span className="h-px w-[3px] bg-white" />
              {p}
            </div>
          ))}
          <div className="absolute top-[50px] left-px w-[51px] bg-white pl-[5px] text-[#222]">1977.52</div>
        </div>
      </div>
      <div className="flex h-[26px]">
        <div className="flex w-[1262px] shrink-0">
          {TIMES.map((x) => (
            <div key={x} className="flex-1 whitespace-nowrap">
              <div className="ml-px h-[5px] w-px bg-white" />
              {x}
            </div>
          ))}
        </div>
      </div>
    </section>
  );
}

const SYMBOL_TABS = ["EURUSD", "USDCHF", "GBPUSD", "USDJPY", "AUDUSD", "USDCAD", "XAUUSD", "NZDUSD", "EURUSD"];

function ChartTabs() {
  return (
    <div className="flex h-[24px] items-start border-t border-t-black text-[13px] text-[#6a6864]">
      <div className="flex pl-[9px]">
        {SYMBOL_TABS.map((s, i) => (
          <button
            key={i}
            className={`mt-px flex h-[18px] items-center justify-center border-r border-r-[#555] ${
              s === "GBPUSD" || s === "USDJPY" ? "w-[104px]" : "w-[108px]"
            }`}
          >
            {s},M15
          </button>
        ))}
        <button className="h-[22px] w-[108px] border-r-2 border-b-2 border-l border-[#222] bg-white text-[#333]">XAUUSD,M15</button>
      </div>
      <div className="flex-1" />
      <div className="flex gap-[18px] pt-[6px] pr-[10px]">
        <button aria-label="Previous tabs">
          <svg width="5" height="8" viewBox="0 0 5 8"><path d="M5 0v8L0 4z" fill="#9c9890" /></svg>
        </button>
        <button aria-label="Next tabs">
          <svg width="5" height="8" viewBox="0 0 5 8"><path d="M0 0v8l5-4z" fill="#9c9890" /></svg>
        </button>
      </div>
    </div>
  );
}

function Timeframes() {
  return (
    <aside className="flex w-[29px] shrink-0 flex-col items-center overflow-hidden border-l-2 border-l-white text-[13px] text-[#5a5854]">
      <div className="mt-[4px] h-[4px] w-[24px] bg-[repeating-linear-gradient(90deg,#8a8780_0px,#8a8780_1px,#d4d0c8_1px,#d4d0c8_3px)]" />
      <div className="mt-1 flex flex-col gap-[3px]">
        {["M1", "M5", "M15", "M30", "H1", "H4", "D1", "W1"].map((f) => (
          <button
            key={f}
            className={
              f === "M15"
                ? "flex h-7 w-[30px] items-center justify-center border border-t-[#808080] border-l-[#808080] border-r-white border-b-white bg-[#e9e7e3]"
                : "flex h-7 w-[30px] items-center justify-center"
            }
          >
            {f}
          </button>
        ))}
      </div>
    </aside>
  );
}

function OrderIcon({ kind }: { kind: "buy" | "sell" | "balance" }) {
  if (kind === "balance")
    return (
      <svg width="18" height="18" viewBox="0 0 18 18" fill="none" aria-hidden="true">
        <rect x="1.500" y="1" width="13" height="15.500" rx="1.500" fill="#fafafa" stroke="#777" strokeWidth="1.400" />
        <path d="M8 4l4.500 4.500H10V13H6V8.500H3.500z" fill="#28b428" stroke="#0f6c0f" strokeWidth=".8" />
      </svg>
    );
  return (
    <svg width="18" height="18" viewBox="0 0 18 18" fill="none" aria-hidden="true">
      <path d="M2.500 1h8l4 4v11.500h-12A1 1 0 0 1 1.500 15V2a1 1 0 0 1 1-1z" fill="#fcfcfc" stroke="#777" strokeWidth="1.400" />
      <path d="M10.500 1v4h4z" fill="#888" stroke="#777" />
      <circle
        cx="13.300"
        cy="13.300"
        r="4"
        fill={kind === "buy" ? "#2ca4ec" : "#ec5418"}
        stroke={kind === "buy" ? "#14649c" : "#942c08"}
      />
      <circle cx="12.300" cy="12" r="1.300" fill="#fff" fillOpacity=".55" />
    </svg>
  );
}

const HEADS = ["Time", "Type", "Size", "Symbol", "Price", "S / L", "T / P", "Time", "Price", "Swap", "Profit", "Comment"];

function History() {
  const head =
    "h-[22px] border-t border-l border-r-2 border-b-2 border-t-white border-l-white border-r-[#6c6a66] border-b-[#6c6a66] bg-[#d4d0c8] p-0 font-normal";
  const cell = "border-r border-b border-[#cccccc] p-0 pr-[3px] text-right whitespace-nowrap";
  return (
    <table className="w-full table-fixed border-separate border-spacing-0 text-[13px] leading-4 text-[#222]">
      <colgroup>
        <col className="w-[121px]" />
        <col className="w-[207px]" />
        <col className="w-[94px]" />
        <col className="w-[75px]" />
        <col className="w-[94px]" />
        <col className="w-[93px]" />
        <col className="w-[94px]" />
        <col className="w-[94px]" />
        <col className="w-[207px]" />
        <col className="w-[94px]" />
        <col className="w-[93px]" />
        <col className="w-[104px]" />
        <col />
      </colgroup>
      <thead>
        <tr>
          <th className={`${head} pl-[5px] text-left`}>
            <span className="flex items-center gap-4">
              Order
              <svg width="11" height="10" viewBox="0 0 11 10" fill="none" aria-hidden="true">
                <path d="M5.500 .5L.5 9.500" stroke="#8c8880" />
                <path d="M5.500 .5l5 9H.5" stroke="#fff" />
              </svg>
            </span>
          </th>
          {HEADS.map((h, i) => (
            <th key={i} className={`${head} pr-[5px] text-right`}>
              {h}
            </th>
          ))}
        </tr>
      </thead>
      <tbody className="[&>tr]:h-[25px] [&>tr:nth-child(3n+1)]:h-6">
        <tr className="bg-white">
          <td className={cell}>
            <span className="flex items-center gap-[6px] pl-[3px]">
              <OrderIcon kind="balance" />
              1718503033
            </span>
          </td>
          <td className={cell}>2023.03.31 03:29:33</td>
          <td className={cell}>balance</td>
          <td className={cell} colSpan={8} />
          <td className={cell}>13.00</td>
          <td className={cell}>autoreff commission 2023-03-30</td>
        </tr>
        {TRADES.map((r, i) => (
          <tr
            key={r.id}
            className={r.selected ? "bg-[#0a246a] text-white" : i % 2 === 0 ? "bg-[#eaeaea]" : "bg-white"}
          >
            <td className={cell}>
              <span className="flex items-center gap-[6px] pl-[3px]">
                <OrderIcon kind={r.side} />
                {r.id}
              </span>
            </td>
            <td className={cell}>2023.03.31 {r.open}</td>
            <td className={cell}>{r.side}</td>
            <td className={cell}>1.59</td>
            <td className={cell}>{r.symbol}</td>
            <td className={cell}>{r.price}</td>
            <td className={cell}>{r.stop}</td>
            <td className={cell}>{r.stop}</td>
            <td className={cell}>2023.03.31 {r.close}</td>
            <td className={cell}>{r.exit}</td>
            <td className={cell}>0.00</td>
            <td className={cell}>{r.profit}</td>
            <td className={cell} />
          </tr>
        ))}
        <tr className="bg-[#c8c8c8] font-bold text-[#111]">
          <td colSpan={11} className="p-0">
            <span className="flex items-center gap-[8px] pl-[8px] whitespace-pre">
              <svg width="11" height="11" viewBox="0 0 11 11" fill="none" aria-hidden="true">
                <circle cx="5.500" cy="5.500" r="4" fill="#e4e4e4" stroke="#888" strokeWidth="1.300" />
                <path d="M3 8l5-5" stroke="#999" />
              </svg>
              Profit/Loss: 1 427.40  Credit: 0.00  Deposit: 13.00  Withdrawal: 0.00
            </span>
          </td>
          <td className="p-0 pr-1 text-right">1 440.40</td>
          <td className="p-0" />
        </tr>
      </tbody>
    </table>
  );
}

const TERMINAL_TABS: { name: string; badge?: string; active?: boolean }[] = [
  { name: "Trade" },
  { name: "Exposure" },
  { name: "Account History", active: true },
  { name: "News", badge: "22" },
  { name: "Alerts" },
  { name: "Mailbox", badge: "7" },
  { name: "Market" },
  { name: "Signals" },
  { name: "Articles" },
  { name: "Code Base" },
  { name: "Experts" },
  { name: "Journal" },
];

function Terminal() {
  return (
    <section className="flex flex-1 border-t-2 border-t-[#f4f2ee] pt-1">
      <div className="flex w-[20px] shrink-0 flex-col border-r-2 border-r-[#b4b0a8]">
        <button aria-label="Close terminal" className="flex h-[17px] items-center justify-center pb-1">
          <svg width="8" height="8" viewBox="0 0 8 8"><path d="M1 1l6 6M7 1L1 7" stroke="#000" strokeWidth="2" /></svg>
        </button>
        <div className="flex flex-1 items-end justify-center bg-linear-to-b from-[#bcbcbc] to-[#7c7c7c] pb-1">
          <span className="rotate-180 text-[13px] leading-4 text-[#cccccc] [writing-mode:vertical-rl]">Terminal</span>
        </div>
      </div>
      <div className="flex min-w-0 flex-1 flex-col border-t border-t-[#8c8880] bg-white">
        <History />
        <div className="flex-1" />
        <div className="flex h-[28px] items-start border-t-2 border-t-[#444] bg-[#d4d0c8] pl-[5px] text-[13px] text-[#5c5a56]">
          {TERMINAL_TABS.map((x, i) =>
            x.active ? (
              <button
                key={x.name}
                className="-mt-[2px] h-6 border-r-2 border-b-2 border-l-2 border-[#333] bg-white px-3 text-[#222]"
              >
                {x.name}
              </button>
            ) : (
              <button
                key={x.name}
                className={`mt-px flex h-[18px] items-center gap-[2px] pr-[13px] pl-[10px] leading-4 ${
                  TERMINAL_TABS[i + 1]?.active ? "" : "border-r-2 border-r-[#8c8880]"
                }`}
              >
                {x.name}
                {x.badge && <span className="pt-2 text-[11px] leading-3 font-bold text-[#d03038]">{x.badge}</span>}
              </button>
            )
          )}
        </div>
      </div>
    </section>
  );
}

function StatusBar() {
  const cell = "flex h-[22px] shrink-0 items-center border-l-2 border-l-[#a8a49c] pl-[5px] whitespace-nowrap";
  return (
    <footer className="flex h-[31px] items-center overflow-hidden border-t-2 border-t-[#8c8880] pt-[2px] text-[13px] text-[#222]">
      <span className="flex-1 pl-[2px]">For Help, press F1</span>
      <span className={`${cell} w-[134px]`}>Default</span>
      <span className={`${cell} w-[125px]`}>2023.03.31 08:00</span>
      <span className={`${cell} w-[89px]`}>O: 1980.73</span>
      <span className={`${cell} w-[88px]`}>H: 1980.83</span>
      <span className={`${cell} w-[85px]`}>L: 1979.17</span>
      <span className={`${cell} w-[87px]`}>C: 1979.52</span>
      <span className={`${cell} w-[82px]`}>V: 570</span>
      <span className={`${cell} w-[141px] gap-[5px]`}>
        <svg width="29" height="18" viewBox="0 0 29 18" aria-hidden="true">
          {[0, 1, 2, 3, 4, 5, 6, 7, 8, 9].map((i) => (
            <g key={i}>
              <rect x={i * 3} y="0" width="2.300" height={12 - i} fill="#6c8414" />
              <rect x={i * 3} y={14 - i} width="2.300" height={4 + i} fill="#1c5474" />
            </g>
          ))}
        </svg>
        100279/270 kb
      </span>
    </footer>
  );
}

export default function App() {
  return (
    <div className="flex min-h-screen w-full flex-col overflow-hidden border-t border-l-2 border-t-[#d4d0c8] border-l-[#55534f] bg-[#d4d0c8] font-['DejaVu_Sans_Condensed','DejaVu_Sans',sans-serif]">
      <TitleBar />
      <MenuBar />
      <Toolbar />
      <div className="flex">
        <main className="min-w-0 flex-1">
          <Chart />
          <div className="h-[2px] bg-[#f4f2ee]" />
          <ChartTabs />
        </main>
        <Timeframes />
      </div>
      <Terminal />
      <StatusBar />
    </div>
  );
}
